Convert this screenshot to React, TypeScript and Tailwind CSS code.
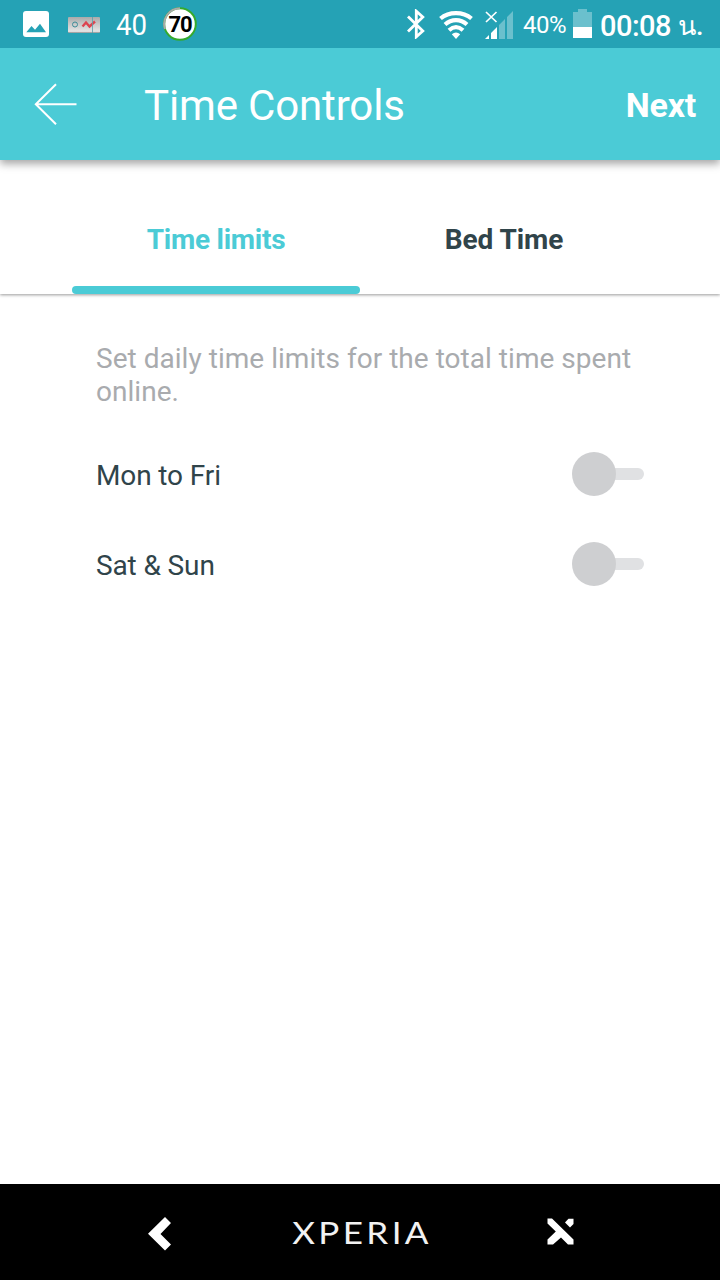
import { useState } from 'react'
import { clsx } from 'clsx'

const TABS = [
  { name: 'Time limits', spacing: 'tracking-[-0.25px]' },
  { name: 'Bed Time', spacing: 'tracking-[-0.05px]' },
]

const LIMITS = [
  { id: 'weekdays', label: 'Mon to Fri' },
  { id: 'weekend', label: 'Sat & Sun' },
]

function StatusBar() {
  return (
    <div className="z-20 flex h-12 flex-shrink-0 items-center bg-[#25a2b5] text-white">
      {/* Notifications */}
      <svg className="ml-[23px] h-[26px] w-[26px]" viewBox="0 0 26 26">
        <rect width="26" height="26" rx="3" fill="#fff" />
        <path d="M3.3 21.3 L8.5 15 L12 18.7 L17 12.7 L23 21.3 Z" fill="#25a2b5" />
      </svg>
      <svg className="ml-[19px] mt-0.5 h-4 w-8" viewBox="0 0 32 16">
        <defs>
          <linearGradient id="strip" x1="0" y1="0" x2="0" y2="1">
            <stop offset="0" stopColor="#aaa" />
            <stop offset="0.5" stopColor="#ccc" />
            <stop offset="0.9" stopColor="#e4e4e4" />
            <stop offset="1" stopColor="#888" />
          </linearGradient>
        </defs>
        <rect width="32" height="16" rx="1" fill="url(#strip)" />
        <circle cx="7" cy="7.5" r="2.5" fill="none" stroke="#3d8c98" strokeWidth="1" />
        <path d="M14.5 9.5 L18 5.5 L21.5 9.5 L27 4.5" fill="none" stroke="#dc4450" strokeWidth="2.4" />
        <path d="M24.5 0 V16" stroke="#5aa0aa" strokeWidth="0.8" />
      </svg>
      <span className="ml-[16px] mt-0.5 w-[31px] origin-left scale-x-[0.92] whitespace-nowrap text-[30px] leading-none">
        40
      </span>
      <div className="relative ml-[16px] h-[34px] w-[34px]">
        <svg className="h-full w-full" viewBox="0 0 34 34">
          <circle cx="17" cy="17" r="15.8" fill="#fff" stroke="#35aa2d" strokeWidth="2" />
          <path d="M2 22 A15.8 15.8 0 0 1 17 1.2" fill="none" stroke="#aaa" strokeWidth="2" />
        </svg>
        <span className="absolute inset-0 flex items-center justify-center text-[22px] font-bold tracking-[-1px] text-black">
          70
        </span>
      </div>

      {/* System */}
      <svg className="ml-[210px] h-[30px] w-[18px]" viewBox="0 0 18 30" fill="none" stroke="#fff" strokeWidth="2.8">
        <path d="M1 7.5 L15.8 22 L9.3 27.8 V2.2 L15.8 8 L1 22.5" />
      </svg>
      <svg className="ml-[14px] mt-0.5 h-7 w-[34px]" viewBox="0 0 34 28">
        <g fill="none" stroke="#fff" strokeWidth="4.2">
          <path d="M1.5 7.5 C10 0.3 24 0.3 32.5 7.5" />
          <path d="M6 13.5 C12.5 7.7 21.5 7.7 28 13.5" />
          <path d="M10 19.2 C14.5 15.2 19.5 15.2 24 19.2" />
        </g>
        <path d="M12.8 23.2 Q17 19.8 21.2 23.2 L17 28 Z" fill="#fff" />
      </svg>
      <svg className="ml-[12px] mt-0.5 h-7 w-7" viewBox="0 0 28 28">
        <path d="M1 1 L11.5 11 M11.5 1 L1 11" stroke="#fff" strokeWidth="1.7" />
        <path d="M0 28 L4 24 V28 Z M6 28 V22 L12 16 V28 Z" fill="#fff" />
        <path d="M14 28 V14 L20 8 V28 Z M22 28 V6 L28 0 V28 Z" fill="#fff" fillOpacity="0.32" />
      </svg>
      <span className="ml-[10px] mt-0.5 w-[44px] whitespace-nowrap text-[24px] leading-none tracking-[-0.5px]">
        40%
      </span>
      <svg className="ml-[6px] mt-[-1px] h-[29px] w-[19px]" viewBox="0 0 19 29">
        <path d="M5 0 H14 V3 H19 V18 H0 V3 H5 Z" fill="#fff" fillOpacity="0.32" />
        <path d="M0 18 H19 V29 H0 Z" fill="#fff" />
      </svg>
      <span className="ml-[8px] mt-1 w-[71px] whitespace-nowrap text-[29px] font-medium leading-none tracking-[-0.5px]">
        00:08
      </span>
      <span className="ml-[7px] mt-1 whitespace-nowrap text-[27px] font-medium leading-none">น.</span>
    </div>
  )
}

function Toggle({ on, onChange }: { on: boolean; onChange: () => void }) {
  return (
    <button
      role="switch"
      aria-checked={on}
      onClick={onChange}
      className={clsx('flex w-[72px] items-center', on && 'flex-row-reverse')}
    >
      <span className={clsx('z-10 h-11 w-11 rounded-full', on ? 'bg-[#4bcbd6]' : 'bg-[#cecfd1]')} />
      <span
        className={clsx(
          'h-3 flex-1',
          on ? '-mr-0.5 rounded-l-full bg-[#a5e5ea]' : '-ml-0.5 rounded-r-full bg-[#e0e1e3]'
        )}
      />
    </button>
  )
}

export default function App() {
  const [tab, setTab] = useState('Time limits')
  const [enabled, setEnabled] = useState<Record<string, boolean>>({})

  return (
    <div className="flex h-[1280px] w-[720px] flex-col overflow-hidden bg-white font-[Roboto,'Noto_Sans',sans-serif]">
      <StatusBar />

      {/* App bar */}
      <header className="z-10 flex h-28 flex-shrink-0 items-center bg-[#4bcbd6] px-6 text-white shadow-[0_4px_8px_rgba(0,0,0,0.35)]">
        <button aria-label="Back" className="ml-[10px]">
          <svg className="h-[42px] w-[43px]" viewBox="0 0 43 42" fill="none" stroke="#fff" strokeWidth="2">
            <path d="M22 1.3 L1.8 21.3 L22 41.3 M1.8 21.3 H42.5" />
          </svg>
        </button>
        <h1 className="ml-[67px] mt-1 flex-1 text-[42px] leading-none tracking-[-0.15px]">Time Controls</h1>
        <button className="mt-0.5 text-[34px] font-bold leading-none tracking-[-0.25px]">Next</button>
      </header>

      {/* Tabs */}
      <nav className="flex h-[134px] flex-shrink-0 px-[72px] shadow-[0_1px_3px_rgba(0,0,0,0.4)]">
        {TABS.map(({ name, spacing }) => (
          <button
            key={name}
            onClick={() => setTab(name)}
            className={clsx(
              'flex w-72 flex-col items-center justify-end text-[28px] font-bold',
              spacing,
              tab === name ? 'text-[#4bcbd6]' : 'text-[#30444a]'
            )}
          >
            <span className="mb-[30px] leading-8">{name}</span>
            <span className={clsx('h-2 w-full rounded-[4px]', tab === name && 'bg-[#4bcbd6]')} />
          </button>
        ))}
      </nav>

      <main className="flex-1 pl-24 pr-[76px] pt-12 text-[28px]">
        <p className="leading-[33px] tracking-[0.03px] text-[#a9abae]">
          Set daily time limits for the total time spent online.
        </p>
        <div className="mt-[21px]">
          {LIMITS.map(({ id, label }) => (
            <div key={id} className="flex h-[90px] items-center justify-between text-[#30444a]">
              <span className="mt-1 tracking-[-0.12px]">{label}</span>
              <Toggle on={!!enabled[id]} onChange={() => setEnabled({ ...enabled, [id]: !enabled[id] })} />
            </div>
          ))}
        </div>
      </main>

      {/* Navigation bar */}
      <footer className="flex h-24 flex-shrink-0 items-center bg-black text-white">
        <svg className="ml-[148px] mt-[3px] h-[34px] w-[23px]" viewBox="0 0 23 34">
          <path d="M17 0 L23 6 L12.5 17 L23 27.5 L17 33.5 L0 16.8 Z" fill="#fff" />
        </svg>
        <span className="ml-[109px] flex w-[160px] justify-center">
          <span className="origin-center scale-x-[1.13] whitespace-nowrap pl-[3px] font-[Lato,sans-serif] text-[31px] leading-none tracking-[3px] text-[#f2f2f2]">
            XPERIA
          </span>
        </span>
        <svg className="ml-[107px] mt-[-2px] h-[27px] w-[27px]" viewBox="0 0 27 27" fill="#fff">
          <path d="M0.5 0.5 H5 L26.5 21.5 V26.5 H21 L14 19.5 L6 26.5 H0.5 V21.5 L8.8 13.5 L0.5 5.5 Z" />
          <path d="M21.5 0.8 H26.5 V6 L23 9.5 L18 4.5 Z" />
        </svg>
      </footer>
    </div>
  )
}
